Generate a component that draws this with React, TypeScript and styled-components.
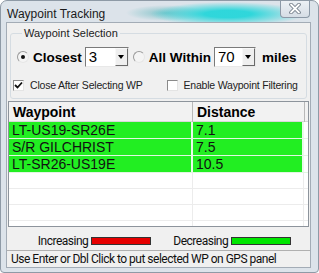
import React from "react";
import styled, { createGlobalStyle } from "styled-components";

const GlobalStyle = createGlobalStyle`
  html, body {
    margin: 0;
    padding: 0;
    background: #ffffff;
  }
  * {
    box-sizing: border-box;
  }
`;

interface WaypointRow {
  name: string;
  distance: string;
}

const rows: WaypointRow[] = [
  { name: "LT-US19-SR26E", distance: "7.1" },
  { name: "S/R GILCHRIST", distance: "7.5" },
  { name: "LT-SR26-US19E", distance: "10.5" },
];

const emptyRows = 4;

const App: React.FC = () => {
  return (
    <>
      <GlobalStyle />
      <Window>
        <TitleBar>
          <Title>Waypoint Tracking</Title>
          <CloseButton>
            <svg width="16" height="11" viewBox="0 0 16 11">
              <path d="M4 1.5 L12 9.5 M12 1.5 L4 9.5" stroke="#6f7a86" strokeWidth="3.6" strokeLinecap="round" />
              <path d="M4 1.5 L12 9.5 M12 1.5 L4 9.5" stroke="#ffffff" strokeWidth="1.8" strokeLinecap="round" />
            </svg>
          </CloseButton>
        </TitleBar>
        <Client>
          <GroupBox>
            <GroupLegend>Waypoint Selection</GroupLegend>
            <OptionRow>
              <Radio checked />
              <BoldLabel>Closest</BoldLabel>
              <Combo width={44} gapAfter={4}>
                <ComboValue>3</ComboValue>
                <ComboButton>
                  <Arrow />
                </ComboButton>
              </Combo>
              <Radio />
              <BoldLabel>All Within</BoldLabel>
              <Combo width={42} gapAfter={6}>
                <ComboValue>70</ComboValue>
                <ComboButton>
                  <Arrow />
                </ComboButton>
              </Combo>
              <BoldLabel>miles</BoldLabel>
            </OptionRow>
            <CheckRow>
              <CheckItem>
                <CheckBox>
                  <svg width="9" height="9" viewBox="0 0 9 9">
                    <path d="M1 4 L3.5 6.5 L8 1.5" stroke="#111" strokeWidth="1.8" fill="none" />
                  </svg>
                </CheckBox>
                <SmallLabel>Close After Selecting WP</SmallLabel>
              </CheckItem>
              <CheckItem>
                <CheckBox />
                <SmallLabel>Enable Waypoint Filtering</SmallLabel>
              </CheckItem>
            </CheckRow>
          </GroupBox>

          <ListBox>
            <HeaderRow>
              <HeaderCell>Waypoint</HeaderCell>
              <HeaderCell>Distance</HeaderCell>
              <HeaderCell />
            </HeaderRow>
            {rows.map((r) => (
              <DataRow key={r.name}>
                <DataCell>{r.name}</DataCell>
                <DataCell>{r.distance}</DataCell>
              </DataRow>
            ))}
            {Array.from({ length: emptyRows }).map((_, i) => (
              <EmptyRow key={i}>
                <EmptyCell />
                <EmptyCell />
              </EmptyRow>
            ))}
          </ListBox>

          <LegendRow>
            <LegendItem>
              <LegendText>Increasing</LegendText>
              <Swatch color="#e60000" />
            </LegendItem>
            <LegendItem>
              <LegendText>Decreasing</LegendText>
              <Swatch color="#00e600" />
            </LegendItem>
          </LegendRow>

          <StatusBar>Use Enter or Dbl Click to put selected WP on GPS panel</StatusBar>
        </Client>
      </Window>
    </>
  );
};

const Window = styled.div`
  width: 319px;
  height: 273px;
  display: flex;
  flex-direction: column;
  background: #dce3ea;
  border: 1px solid #8e9aa6;
  border-radius: 7px 7px 4px 4px;
  padding: 0 7px 5px 5px;
  font-family: "Liberation Sans", Arial, sans-serif;
  color: #000;
  overflow: hidden;
`;

const TitleBar = styled.div`
  height: 25px;
  display: flex;
  align-items: flex-start;
  background: radial-gradient(ellipse 78px 12px at 222px 13px, rgba(38, 214, 218, 0.95) 30%, rgba(38, 214, 218, 0) 100%),
    radial-gradient(ellipse 40px 8px at 160px 12px, rgba(60, 170, 175, 0.55), rgba(60, 170, 175, 0) 100%);
`;

const Title = styled.div`
  font-size: 12px;
  line-height: 16px;
  padding: 5px 0 0 1px;
  color: #1a1a1a;
`;

const CloseButton = styled.div`
  margin-left: auto;
  margin-right: 1px;
  width: 30px;
  height: 18px;
  margin-top: -1px;
  border: 1px solid #8c99a7;
  border-top: none;
  border-radius: 0 0 4px 4px;
  background: linear-gradient(#eef2f6, #d6dde5);
  display: flex;
  align-items: center;
  justify-content: center;
`;

const Client = styled.div`
  flex: 1;
  display: flex;
  flex-direction: column;
  background: #f0f0f0;
  border: 1px solid #a3acb6;
`;

const GroupBox = styled.fieldset`
  margin: 4px 3px 0 3px;
  padding: 0 4px 0 6px;
  border: 1px solid #d5dce2;
  border-radius: 3px;
  height: 72px;
`;

const GroupLegend = styled.legend`
  font-size: 11px;
  padding: 0 2px;
  margin-left: 5px;
  color: #222;
`;

const OptionRow = styled.div`
  display: flex;
  align-items: center;
  height: 22px;
  margin-top: 7px;
`;

const Radio = styled.span<{ checked?: boolean }>`
  width: 12px;
  height: 12px;
  border-radius: 50%;
  border: 1px solid;
  border-color: #9a9a9a #e6e6e6 #e6e6e6 #9a9a9a;
  background: #f4f4f4;
  display: inline-flex;
  align-items: center;
  justify-content: center;
  margin-right: 4px;
  flex-shrink: 0;
  &::after {
    content: "";
    width: 4px;
    height: 4px;
    border-radius: 50%;
    background: ${({ checked }) => (checked ? "#111" : "transparent")};
  }
`;

const BoldLabel = styled.span`
  font-weight: bold;
  font-size: 13.5px;
  margin-right: 3px;
  white-space: nowrap;
`;

const Combo = styled.div<{ width: number; gapAfter: number }>`
  width: ${({ width }) => width}px;
  height: 20px;
  display: flex;
  background: #fff;
  border: 1px solid;
  border-color: #7a7a7a #e8e8e8 #e8e8e8 #7a7a7a;
  margin-right: ${({ gapAfter }) => gapAfter}px;
  margin-left: 0;
`;

const ComboValue = styled.span`
  flex: 1;
  font-size: 15px;
  line-height: 18px;
  padding-left: 3px;
`;

const ComboButton = styled.span`
  width: 13px;
  background: #efefef;
  border: 1px solid;
  border-color: #f8f8f8 #6a6a6a #6a6a6a #f8f8f8;
  display: flex;
  align-items: center;
  justify-content: center;
`;

const Arrow = styled.span`
  width: 0;
  height: 0;
  border-left: 3.5px solid transparent;
  border-right: 3.5px solid transparent;
  border-top: 4px solid #000;
`;

const CheckRow = styled.div`
  display: flex;
  align-items: center;
  margin-top: 11px;
  margin-left: -4px;
  gap: 24px;
`;

const CheckItem = styled.div`
  display: flex;
  align-items: center;
`;

const CheckBox = styled.span`
  width: 11px;
  height: 11px;
  background: #fff;
  border: 1px solid;
  border-color: #8a8a8a #e4e4e4 #e4e4e4 #8a8a8a;
  display: inline-flex;
  align-items: center;
  justify-content: center;
  margin-right: 6px;
`;

const SmallLabel = styled.span`
  font-size: 10.5px;
  letter-spacing: -0.2px;
  color: #222;
  white-space: nowrap;
`;

const ListBox = styled.div`
  margin: 2px 1px 0 1px;
  height: 126px;
  background: #fff;
  border: 1px solid #8d949c;
  overflow: hidden;
`;

const HeaderRow = styled.div`
  display: grid;
  grid-template-columns: 184px 112px 1fr;
  height: 20px;
  background: #f2f2f2;
  border-bottom: 1px solid #d8d8d8;
`;

const HeaderCell = styled.div`
  font-weight: bold;
  font-size: 14px;
  line-height: 20px;
  padding-left: 4px;
  border-right: 1px solid #b8b8b8;
  &:last-child {
    border-right: none;
  }
`;

const DataRow = styled.div`
  display: grid;
  grid-template-columns: 184px 111px;
  height: 17px;
  border-bottom: 1px solid #e2f6e2;
`;

const DataCell = styled.div`
  background: #22ee22;
  font-size: 14px;
  line-height: 16px;
  padding-left: 3px;
  color: #111;
  border-right: 2px solid #eafaea;
  white-space: nowrap;
`;

const EmptyRow = styled.div`
  display: grid;
  grid-template-columns: 184px 111px;
  height: 16px;
  border-bottom: 1px solid #ececec;
`;

const EmptyCell = styled.div`
  border-right: 1px solid #ececec;
`;

const LegendRow = styled.div`
  height: 23px;
  display: flex;
  align-items: center;
  justify-content: center;
  padding: 4px 0 0 12px;
  gap: 22px;
`;

const LegendItem = styled.div`
  display: flex;
  align-items: center;
  gap: 3px;
`;

const LegendText = styled.span`
  font-family: "Roboto", "Liberation Sans", sans-serif;
  font-size: 12px;
  letter-spacing: -0.5px;
  color: #111;
`;

const Swatch = styled.span<{ color: string }>`
  width: 60px;
  height: 8px;
  background: ${({ color }) => color};
  border: 1px solid #333;
`;

const StatusBar = styled.div`
  flex: 1;
  border-top: 1px solid #b0b0b0;
  font-family: "Roboto", "Liberation Sans", sans-serif;
  font-size: 12px;
  letter-spacing: -0.5px;
  line-height: 16px;
  padding-left: 4px;
  color: #111;
  white-space: nowrap;
`;

export default App;
